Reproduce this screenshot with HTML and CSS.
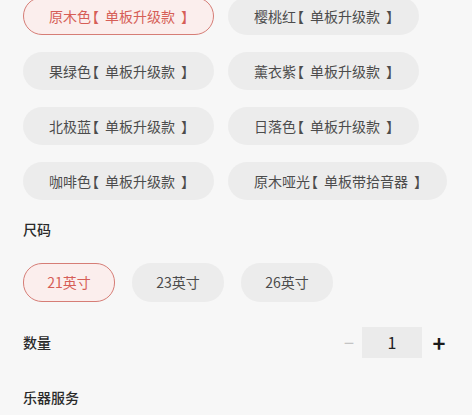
FILE: index.html
```html
<!DOCTYPE html>
<html lang="zh">
<head>
<meta charset="utf-8">
<link rel="stylesheet" href="styles.css">
</head>
<body>
<div class="page">
  <div class="colors">
    <div class="chip selected">原木色<span class="lb">【</span>单板升级款<span class="rb">】</span></div>
    <div class="chip">樱桃红<span class="lb">【</span>单板升级款<span class="rb">】</span></div>
    <div class="chip">果绿色<span class="lb">【</span>单板升级款<span class="rb">】</span></div>
    <div class="chip">薰衣紫<span class="lb">【</span>单板升级款<span class="rb">】</span></div>
    <div class="chip">北极蓝<span class="lb">【</span>单板升级款<span class="rb">】</span></div>
    <div class="chip">日落色<span class="lb">【</span>单板升级款<span class="rb">】</span></div>
    <div class="chip">咖啡色<span class="lb">【</span>单板升级款<span class="rb">】</span></div>
    <div class="chip">原木哑光<span class="lb">【</span>单板带拾音器<span class="rb">】</span></div>
  </div>
  <div class="label size-label">尺码</div>
  <div class="sizes">
    <div class="chip size selected">21英寸</div>
    <div class="chip size">23英寸</div>
    <div class="chip size">26英寸</div>
  </div>
  <div class="qty-row">
    <div class="label">数量</div>
    <div class="stepper">
      <span class="minus">−</span>
      <span class="value">1</span>
      <span class="plus">+</span>
    </div>
  </div>
  <div class="label service">乐器服务</div>
</div>
</body>
</html>
```
FILE: styles.css
```css
html, body {
  margin: 0;
  padding: 0;
  background: #f7f7f7;
}
body {
  font-family: "Noto Sans CJK SC", "Noto Sans", sans-serif;
  color: #333;
  width: 472px;
  height: 415px;
  overflow: hidden;
}
.page {
  padding: 0 0 0 23px;
}
.colors {
  margin-top: -3px;
  display: grid;
  grid-template-columns: 205px auto;
  row-gap: 17px;
  justify-items: start;
}
.chip {
  box-sizing: border-box;
  height: 38px;
  line-height: 36px;
  padding: 0 25px;
  border: 1px solid transparent;
  border-radius: 19px;
  background: #ececec;
  color: #4c4c4c;
  font-size: 14px;
  white-space: nowrap;
}
.lb,
.rb {
  font-feature-settings: "halt";
}
.lb {
  margin-left: 1px;
  margin-right: 6px;
}
.rb {
  margin-left: 6px;
}
.chip.selected {
  background: #fbeeed;
  border: 1.5px solid #d67d76;
  color: #d65e57;
}
.label {
  font-size: 14px;
  font-weight: 500;
  color: #2a2a2a;
  line-height: 20px;
}
.size-label {
  margin-top: 19px;
}
.sizes {
  display: flex;
  gap: 17px;
  margin-top: 24px;
}
.chip.size {
  width: 92px;
  height: 39px;
  line-height: 36px;
  padding: 0;
  text-align: center;
}
.qty-row {
  display: flex;
  align-items: center;
  justify-content: space-between;
  margin-top: 24px;
  padding-right: 21px;
}
.stepper {
  display: flex;
  align-items: center;
}
.minus {
  color: #c4c4c4;
  font-size: 18px;
  width: 24px;
  text-align: center;
  margin-right: 1px;
}
.value {
  width: 60px;
  height: 31px;
  line-height: 31px;
  text-align: center;
  background: #ebebeb;
  font-size: 16px;
  color: #222;
}
.plus {
  font-size: 22px;
  font-weight: 700;
  color: #1a1a1a;
  width: 24px;
  text-align: center;
  margin-left: 5px;
}
.service {
  margin-top: 29px;
}
```
